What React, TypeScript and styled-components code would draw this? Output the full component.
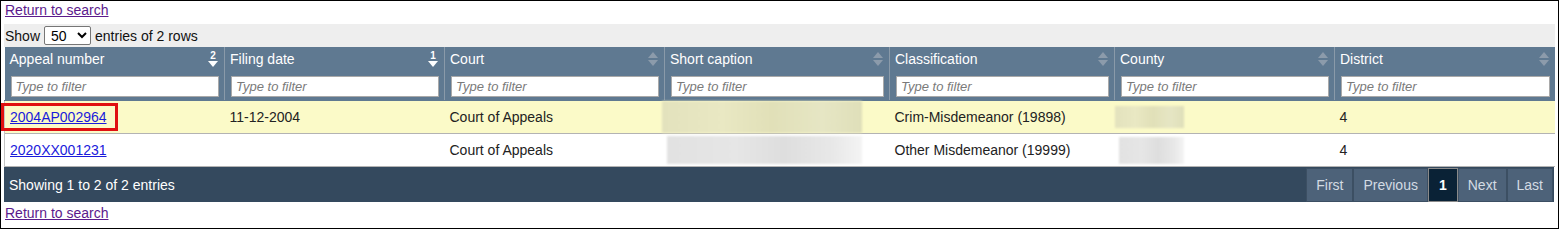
import React from 'react';
import styled, { createGlobalStyle } from 'styled-components';

const GlobalStyle = createGlobalStyle`
  html, body {
    margin: 0;
    padding: 0;
    background: #fff;
  }
  body {
    font-family: 'Liberation Sans', Arial, sans-serif;
    font-size: 14px;
    color: #222;
  }
`;

const Page = styled.div`
  box-sizing: border-box;
  height: 229px;
  border: 1px solid #000;
  padding: 1px 3px 0 3px;
`;

const BackLink = styled.a`
  display: inline-block;
  color: #5b1a8c;
  text-decoration: underline;
  line-height: 16px;
  margin-left: 1px;
  cursor: pointer;
`;

const LengthBar = styled.div`
  display: flex;
  align-items: center;
  gap: 4px;
  height: 23px;
  margin-top: 6px;
  background: #eeeeee;
  padding-left: 1px;
  color: #111;
`;

const LengthSelect = styled.select`
  font-family: 'Liberation Sans', Arial, sans-serif;
  font-size: 14px;
  width: 47px;
  height: 19px;
  padding: 0 0 0 2px;
  border: 1px solid #767676;
  border-radius: 2px;
  background: #fff;
  color: #000;
`;

const Table = styled.table`
  border-collapse: collapse;
  table-layout: fixed;
  width: 1550px;
`;

const HeadCell = styled.th`
  background: #5f7991;
  color: #fff;
  font-weight: normal;
  text-align: left;
  padding: 3px 6px 3px 5px;
  border-right: 1px solid #8a9aa9;
  border-bottom: 1px solid #5f7991;
  vertical-align: top;
  &:last-child {
    border-right: none;
  }
`;

const HeadTitle = styled.div`
  display: flex;
  justify-content: space-between;
  align-items: center;
  height: 18px;
  line-height: 18px;
  margin-bottom: 8px;
`;

const FilterInput = styled.input`
  box-sizing: border-box;
  display: block;
  width: 100%;
  height: 21px;
  margin-left: 1px;
  border: 1px solid #a9a9a9;
  padding: 0 4px;
  font-family: 'Liberation Sans', Arial, sans-serif;
  font-size: 13px;
  background: #fff;
  &::placeholder {
    font-style: italic;
    color: #7a7a7a;
  }
`;

const Row = styled.tr<{ $alt?: boolean }>`
  background: ${({ $alt }) => ($alt ? '#fbfac8' : '#ffffff')};
  border-bottom: 1px solid #b3b3b3;
`;

const Cell = styled.td`
  position: relative;
  height: 32px;
  padding: 0 5px;
  vertical-align: middle;
  white-space: nowrap;
  &:first-child {
    border-left: 1px solid #c4c4c4;
  }
`;

const CaseLink = styled.a`
  color: #1a1adb;
  text-decoration: underline;
  cursor: pointer;
`;

const Highlight = styled.span`
  position: absolute;
  left: -4px;
  top: 2px;
  width: 117px;
  height: 28px;
  box-sizing: border-box;
  border: 3px solid #e01010;
  pointer-events: none;
`;

const Redacted = styled.div<{ $w: number; $h: number; $dx: number; $tone: 'yellow' | 'gray' }>`
  width: ${({ $w }) => $w}px;
  height: ${({ $h }) => $h}px;
  margin-left: ${({ $dx }) => $dx}px;
  background: ${({ $tone }) =>
    $tone === 'yellow'
      ? 'linear-gradient(90deg, #e3e2bd 0%, #e9e8c3 30%, #e1e0b8 55%, #e6e6c4 80%, #dfdfb9 100%)'
      : 'linear-gradient(90deg, #e2e2e2 0%, #e6e6e6 35%, #dedede 60%, #e8e8e8 85%, #f4f4f4 100%)'};
  filter: blur(1px);
`;

const Footer = styled.div`
  display: flex;
  align-items: stretch;
  justify-content: space-between;
  width: 1550px;
  height: 35px;
  background: #34495e;
  color: #fff;
`;

const Info = styled.div`
  display: flex;
  align-items: center;
  padding-left: 5px;
`;

const Pager = styled.div`
  display: flex;
  margin-right: 1px;
`;

const PageButton = styled.div<{ $active?: boolean }>`
  display: flex;
  align-items: center;
  padding: 0 ${({ $active }) => ($active ? 10 : 9)}px;
  background: ${({ $active }) => ($active ? '#0a2236' : '#4d6279')};
  color: ${({ $active }) => ($active ? '#fff' : '#d3dbe3')};
  font-weight: ${({ $active }) => ($active ? 'bold' : 'normal')};
  border: 1px solid ${({ $active }) => ($active ? '#8a8a8a' : '#3c4f63')};
  margin-top: 1px;
  cursor: pointer;
`;

const BottomLink = styled(BackLink)`
  margin-top: 3px;
`;

const SortBoth = () => (
  <svg width="10" height="14" viewBox="0 0 10 14">
    <path d="M5 0 L10 6 L0 6 Z" fill="#8c9bab" />
    <path d="M0 8 L10 8 L5 14 Z" fill="#8c9bab" />
  </svg>
);

const SortDesc = ({ order }: { order: number }) => (
  <svg width="10" height="17" viewBox="0 0 10 17">
    <text
      x="5"
      y="8"
      textAnchor="middle"
      fontSize="10"
      fontWeight="bold"
      fill="#fff"
      fontFamily="Liberation Sans, Arial, sans-serif"
    >
      {order}
    </text>
    <path d="M0 10 L10 10 L5 16 Z" fill="#fff" />
  </svg>
);

type Column = { title: string; width: number; sort?: number };

const columns: Column[] = [
  { title: 'Appeal number', width: 220, sort: 2 },
  { title: 'Filing date', width: 220, sort: 1 },
  { title: 'Court', width: 220 },
  { title: 'Short caption', width: 225 },
  { title: 'Classification', width: 225 },
  { title: 'County', width: 220 },
  { title: 'District', width: 220 },
];

export default function App() {
  return (
    <>
      <GlobalStyle />
      <Page>
        <BackLink>Return to search</BackLink>
        <LengthBar>
          Show
          <LengthSelect defaultValue="50">
            <option value="10">10</option>
            <option value="25">25</option>
            <option value="50">50</option>
            <option value="100">100</option>
          </LengthSelect>
          entries of 2 rows
        </LengthBar>
        <Table>
          <colgroup>
            {columns.map((c) => (
              <col key={c.title} style={{ width: c.width }} />
            ))}
          </colgroup>
          <thead>
            <tr>
              {columns.map((c) => (
                <HeadCell key={c.title}>
                  <HeadTitle>
                    <span>{c.title}</span>
                    {c.sort ? <SortDesc order={c.sort} /> : <SortBoth />}
                  </HeadTitle>
                  <FilterInput placeholder="Type to filter" />
                </HeadCell>
              ))}
            </tr>
          </thead>
          <tbody>
            <Row $alt>
              <Cell>
                <CaseLink>2004AP002964</CaseLink>
                <Highlight />
              </Cell>
              <Cell>11-12-2004</Cell>
              <Cell>Court of Appeals</Cell>
              <Cell>
                <Redacted $w={200} $h={32} $dx={-8} $tone="yellow" />
              </Cell>
              <Cell>Crim-Misdemeanor (19898)</Cell>
              <Cell>
                <Redacted $w={69} $h={22} $dx={-5} $tone="yellow" />
              </Cell>
              <Cell>4</Cell>
            </Row>
            <Row>
              <Cell>
                <CaseLink>2020XX001231</CaseLink>
              </Cell>
              <Cell></Cell>
              <Cell>Court of Appeals</Cell>
              <Cell>
                <Redacted $w={195} $h={28} $dx={-3} $tone="gray" />
              </Cell>
              <Cell>Other Misdemeanor (19999)</Cell>
              <Cell>
                <Redacted $w={65} $h={27} $dx={-1} $tone="gray" />
              </Cell>
              <Cell>4</Cell>
            </Row>
          </tbody>
        </Table>
        <Footer>
          <Info>Showing 1 to 2 of 2 entries</Info>
          <Pager>
            <PageButton>First</PageButton>
            <PageButton>Previous</PageButton>
            <PageButton $active>1</PageButton>
            <PageButton>Next</PageButton>
            <PageButton>Last</PageButton>
          </Pager>
        </Footer>
        <BottomLink>Return to search</BottomLink>
      </Page>
    </>
  );
}
